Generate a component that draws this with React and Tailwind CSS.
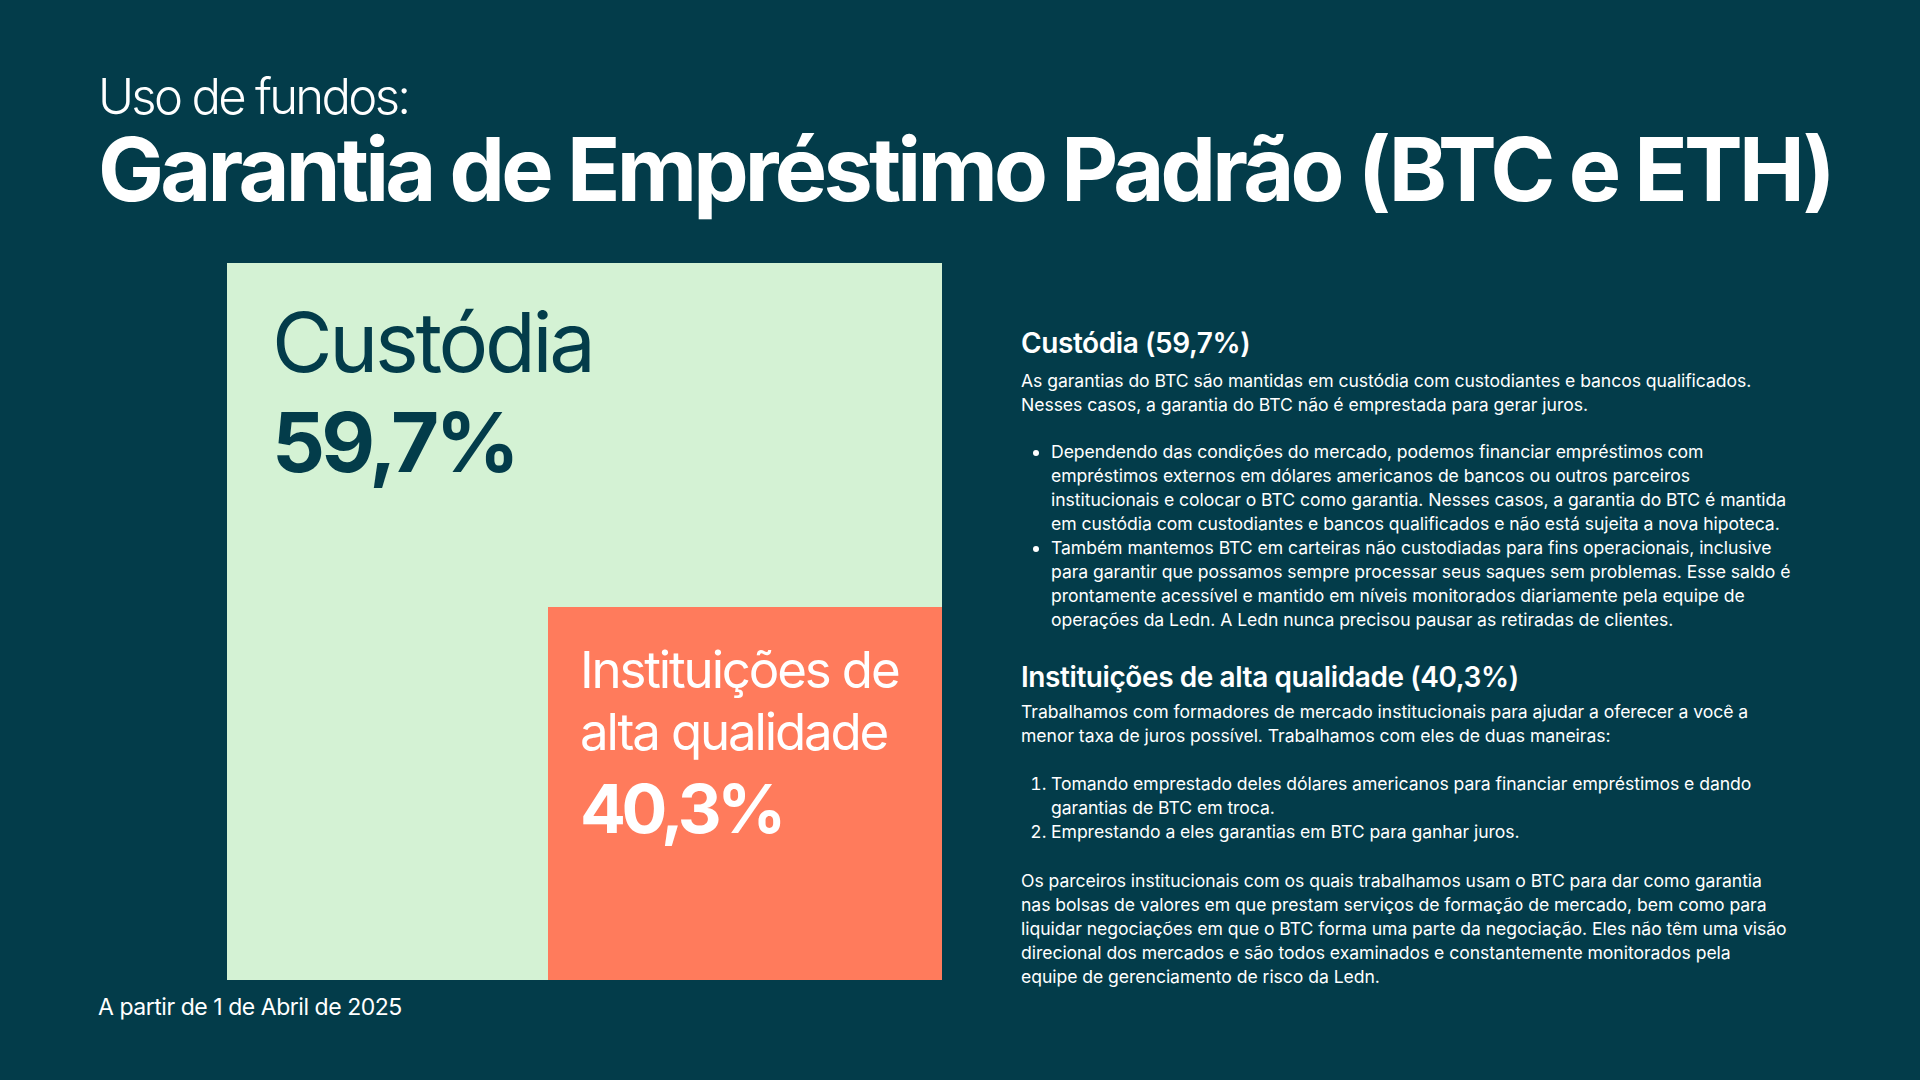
import React from 'react';

const custodyIntro = [
  'As garantias do BTC são mantidas em custódia com custodiantes e bancos qualificados.',
  'Nesses casos, a garantia do BTC não é emprestada para gerar juros.',
];

const custodyBullets = [
  [
    'Dependendo das condições do mercado, podemos financiar empréstimos com',
    'empréstimos externos em dólares americanos de bancos ou outros parceiros',
    'institucionais e colocar o BTC como garantia. Nesses casos, a garantia do BTC é mantida',
    'em custódia com custodiantes e bancos qualificados e não está sujeita a nova hipoteca.',
  ],
  [
    'Também mantemos BTC em carteiras não custodiadas para fins operacionais, inclusive',
    'para garantir que possamos sempre processar seus saques sem problemas. Esse saldo é',
    'prontamente acessível e mantido em níveis monitorados diariamente pela equipe de',
    'operações da Ledn. A Ledn nunca precisou pausar as retiradas de clientes.',
  ],
];

const instIntro = [
  'Trabalhamos com formadores de mercado institucionais para ajudar a oferecer a você a',
  'menor taxa de juros possível. Trabalhamos com eles de duas maneiras:',
];

const instSteps = [
  [
    'Tomando emprestado deles dólares americanos para financiar empréstimos e dando',
    'garantias de BTC em troca.',
  ],
  ['Emprestando a eles garantias em BTC para ganhar juros.'],
];

const instOutro = [
  'Os parceiros institucionais com os quais trabalhamos usam o BTC para dar como garantia',
  'nas bolsas de valores em que prestam serviços de formação de mercado, bem como para',
  'liquidar negociações em que o BTC forma uma parte da negociação. Eles não têm uma visão',
  'direcional dos mercados e são todos examinados e constantemente monitorados pela',
  'equipe de gerenciamento de risco da Ledn.',
];

const Lines = ({ lines }) =>
  lines.map((l, i) => (
    <span key={i} className="block whitespace-nowrap">
      {l}
    </span>
  ));

const App = () => {
  return (
    <div className="w-[1920px] h-[1080px] bg-[#033c4a] text-white font-['Inter','Liberation_Sans',sans-serif] overflow-hidden">
      <div className="pl-[98px] pt-[72px]">
        <div className="text-[49px] leading-none font-light tracking-[-0.055em]">Uso de fundos:</div>
        <h1 className="mt-[4px] text-[88px] leading-none font-bold tracking-[-0.043em]">
          Garantia de Empréstimo Padrão (BTC e ETH)
        </h1>
      </div>

      <div className="flex mt-[50px]">
        {/* grafico */}
        <div className="flex flex-col pl-[98px]">
          <div className="ml-[129px] w-[715px] h-[717px] bg-[#d4f2d4] flex flex-col justify-between">
            <div className="pl-[45px] pt-[38px] text-[#033c4a]">
              <div className="text-[83px] leading-none tracking-[-0.04em]">Custódia</div>
              <div className="mt-[17px] text-[83px] leading-none font-bold tracking-[-0.045em]">59,7%</div>
            </div>
            <div className="flex justify-end">
              <div className="w-[394px] h-[373px] bg-[#ff7b5c] pl-[32px] pt-[32px] text-white">
                <div className="text-[51px] leading-[62px] tracking-[-0.042em]">
                  Instituições de
                  <br />
                  alta qualidade
                </div>
                <div className="mt-[11px] text-[68px] leading-none font-bold tracking-[-0.065em]">40,3%</div>
              </div>
            </div>
          </div>
          <div className="mt-[13px] text-[23px] leading-[28px] tracking-[-0.02em]">A partir de 1 de Abril de 2025</div>
        </div>

        {/* texto */}
        <div className="ml-[79px] pt-[63px] text-[17.6px] leading-[24px] tracking-[-0.003em]">
          <h2 className="text-[28px] leading-[34px] font-semibold tracking-[-0.015em]">Custódia (59,7%)</h2>
          <p className="mt-[9px]">
            <Lines lines={custodyIntro} />
          </p>
          <ul className="mt-[23px] list-disc pl-[30px]">
            {custodyBullets.map((b, i) => (
              <li key={i}>
                <Lines lines={b} />
              </li>
            ))}
          </ul>

          <h2 className="mt-[28px] text-[28px] leading-[34px] font-semibold tracking-[-0.015em]">
            Instituições de alta qualidade (40,3%)
          </h2>
          <p className="mt-[6px]">
            <Lines lines={instIntro} />
          </p>
          <ol className="mt-[24px] list-decimal pl-[30px]">
            {instSteps.map((s, i) => (
              <li key={i}>
                <Lines lines={s} />
              </li>
            ))}
          </ol>
          <p className="mt-[25px]">
            <Lines lines={instOutro} />
          </p>
        </div>
      </div>
    </div>
  );
};

export default App;
